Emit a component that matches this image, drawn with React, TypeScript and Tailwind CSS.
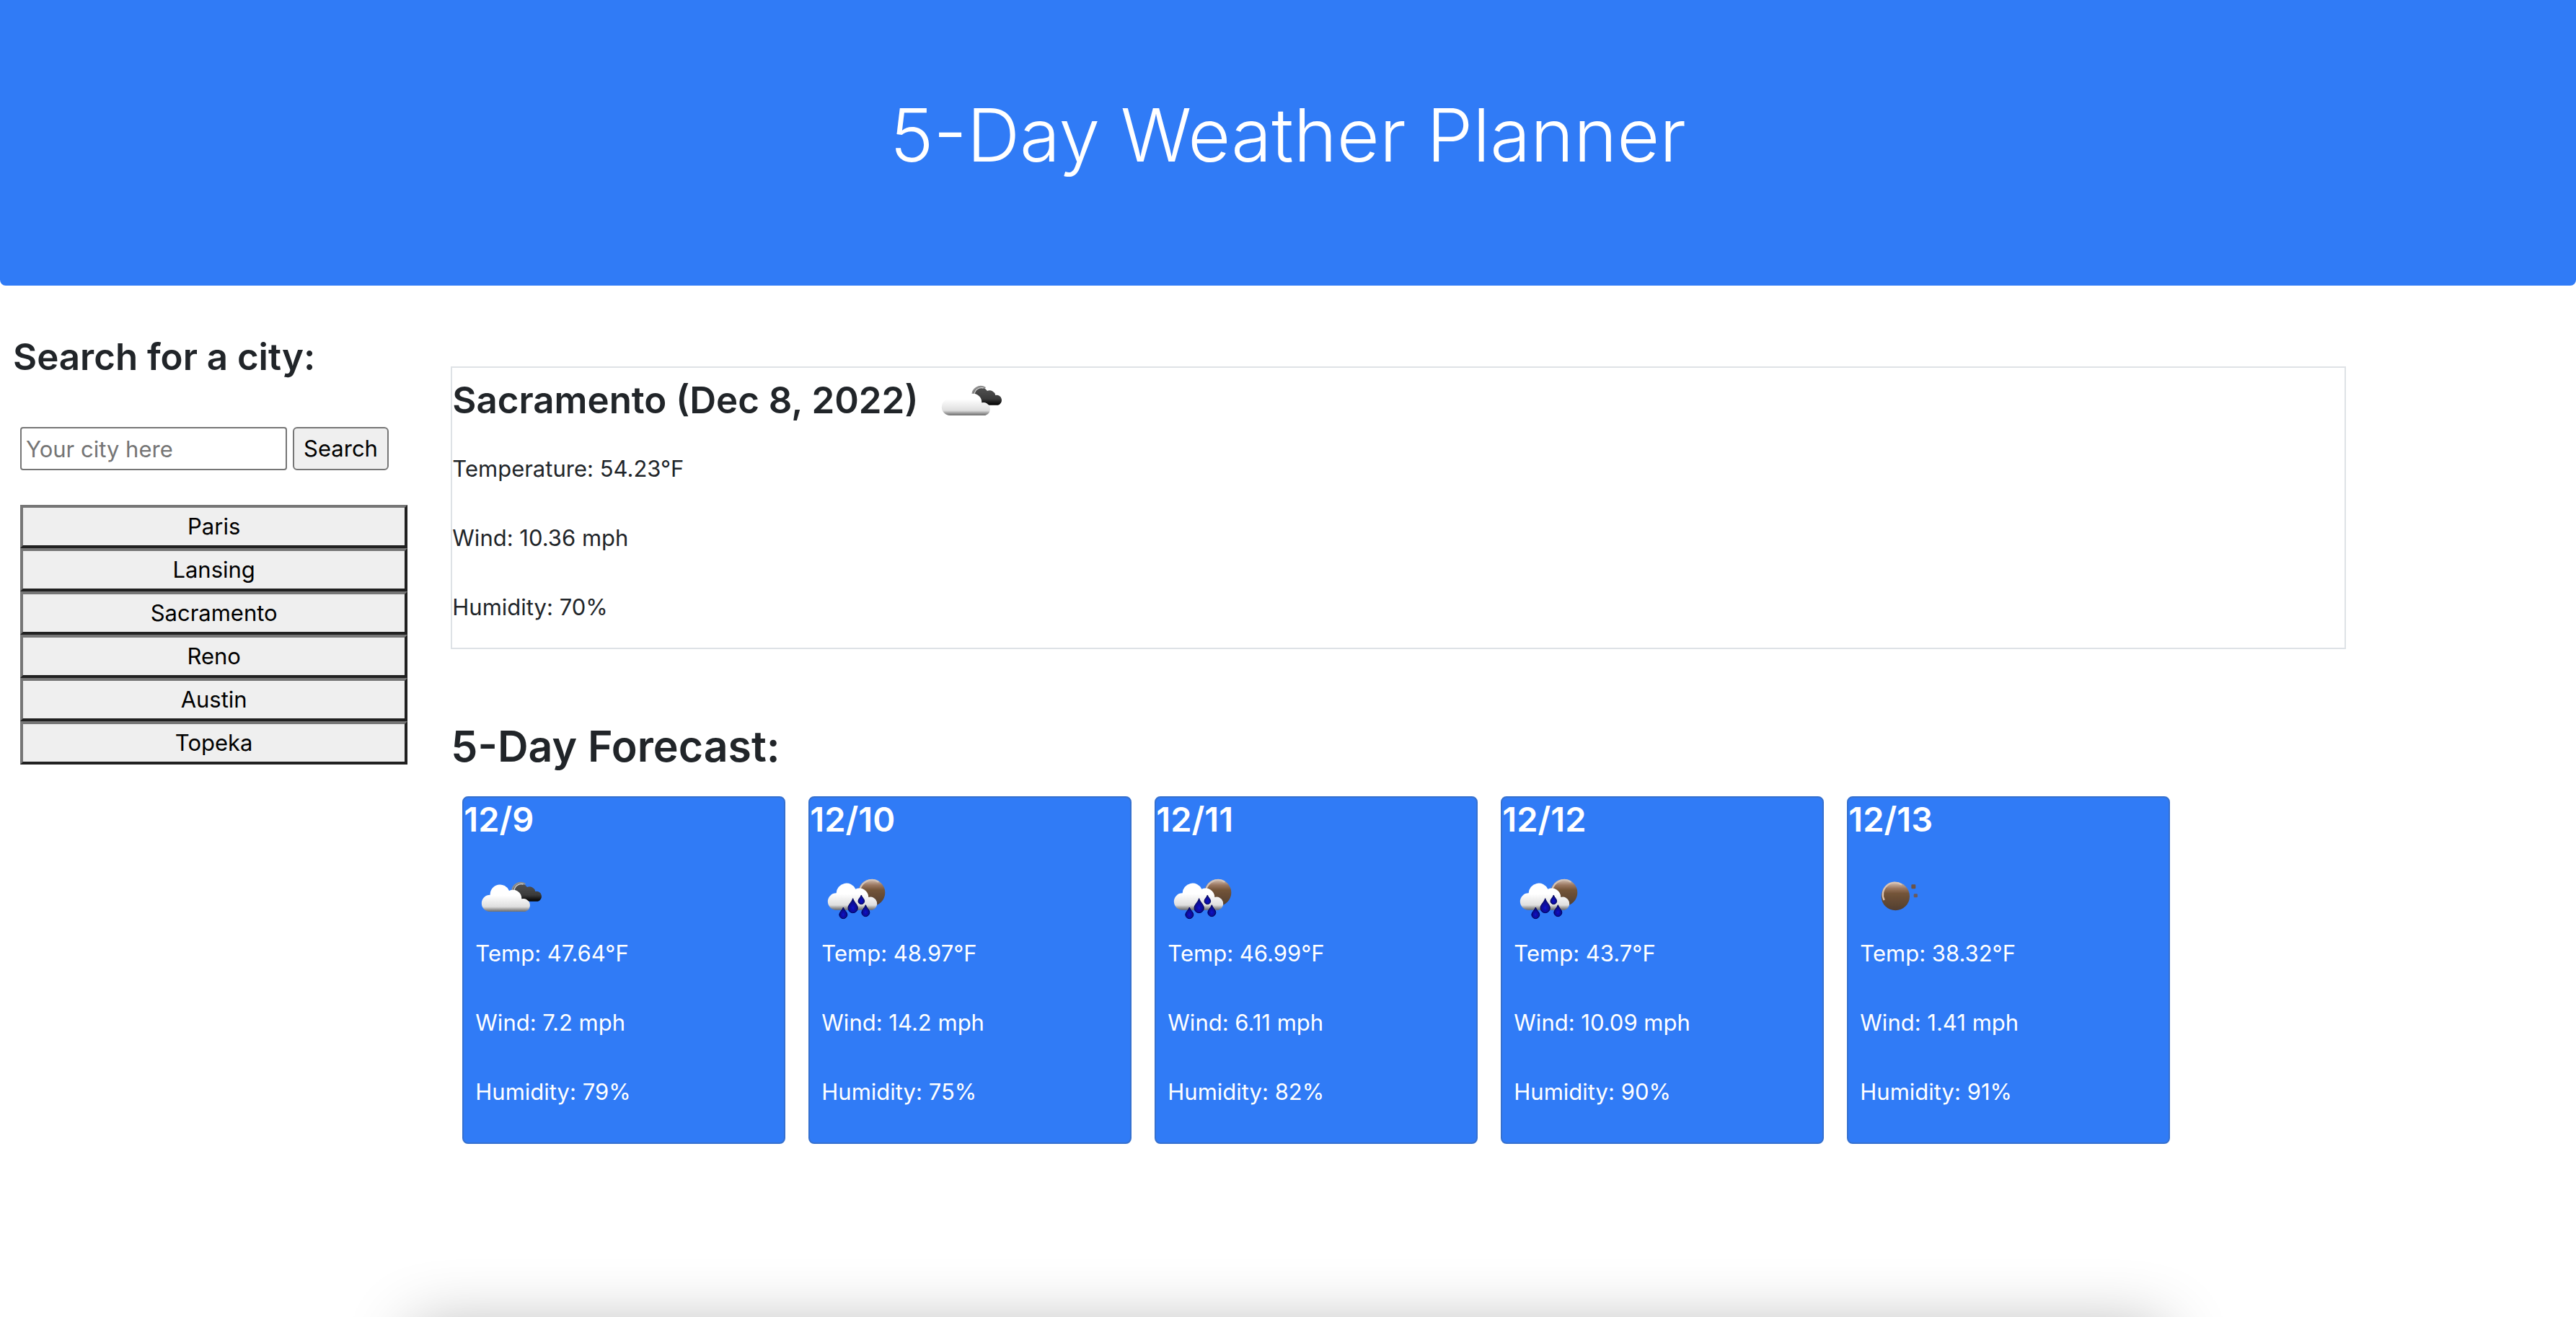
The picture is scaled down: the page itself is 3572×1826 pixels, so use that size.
import { useId, type ReactNode } from "react";

type IconKind = "clouds" | "rain" | "night";

const cities = ["Paris", "Lansing", "Sacramento", "Reno", "Austin", "Topeka"];

const forecast: { date: string; icon: IconKind; label: string; temp: string; wind: string; humidity: string }[] = [
  { date: "12/9", icon: "clouds", label: "Broken clouds", temp: "47.64", wind: "7.2", humidity: "79" },
  { date: "12/10", icon: "rain", label: "Rain", temp: "48.97", wind: "14.2", humidity: "75" },
  { date: "12/11", icon: "rain", label: "Rain", temp: "46.99", wind: "6.11", humidity: "82" },
  { date: "12/12", icon: "rain", label: "Rain", temp: "43.7", wind: "10.09", humidity: "90" },
  { date: "12/13", icon: "night", label: "Clear night", temp: "38.32", wind: "1.41", humidity: "91" },
];

function Drop({ x, y, w, h, fill }: { x: number; y: number; w: number; h: number; fill: string }) {
  const r = w / 2;
  return (
    <path
      d={`M${x} ${y} C${x + r * 0.3} ${y + h * 0.3} ${x + r} ${y + h * 0.42} ${x + r} ${y + h - r} A${r} ${r} 0 0 1 ${x - r} ${y + h - r} C${x - r} ${y + h * 0.42} ${x - r * 0.3} ${y + h * 0.3} ${x} ${y} Z`}
      fill={fill}
      stroke="#04045c"
      strokeWidth="3"
    />
  );
}

function WeatherIcon({ kind, label }: { kind: IconKind; label: string }) {
  const id = useId();
  const ref = (name: string) => `url(#${id}${name})`;
  const shapes: Record<IconKind, ReactNode> = {
    clouds: (
      <g transform="translate(-24 6)">
        <path d="M176 112 A35 35 0 0 1 240 90 A25 25 0 0 1 274 108 A21 21 0 0 1 284 149 L205 149 Z" fill={ref("dark")} />
        <path d="M179 110 A34 34 0 0 1 232 78" fill="none" stroke="#8d8d8d" strokeWidth="7" />
        <path d="M186 108 A30 30 0 0 1 224 78" fill="none" stroke="#d6d6d6" strokeWidth="4" />
        <path d="M85 192 A34 34 0 0 1 86 122 A41 41 0 0 1 165 105 A36 36 0 0 1 217 139 A27 27 0 0 1 232 192 Z" fill={ref("cloud")} />
      </g>
    ),
    rain: (
      <g transform="translate(-24 6)">
        <circle cx="233" cy="113" r="56" fill={ref("ball")} />
        <path d="M184 100 A52 52 0 0 1 262 68" fill="none" stroke="#d3c3b8" strokeWidth="7" />
        <path d="M85 185 A35 35 0 0 1 86 115 A42 42 0 0 1 166 98 A38 38 0 0 1 220 132 A27 27 0 0 1 236 185 Z" fill={ref("cloud")} />
        <Drop x={155} y={137} w={40} h={60} fill={ref("drop")} />
        <Drop x={190} y={123} w={26} h={38} fill={ref("drop")} />
        <Drop x={115} y={174} w={33} h={47} fill={ref("drop")} />
        <Drop x={208} y={164} w={33} h={48} fill={ref("drop")} />
      </g>
    ),
    night: (
      <g transform="translate(4 6)">
        <circle cx="144" cy="128" r="59" fill={ref("ball")} />
        <path d="M97 144 A50 50 0 0 1 170 80" fill="none" stroke="#dcc4b2" strokeWidth="7" />
        <rect x="210" y="79" width="18" height="18" rx="4" fill="#6b5247" />
        <rect x="220" y="118" width="16" height="15" rx="4" fill="#6b5a5c" />
      </g>
    ),
  };
  return (
    <svg viewBox="0 0 300 300" className="size-[100px] shrink-0" role="img" aria-label={label}>
      <defs>
        <linearGradient id={`${id}cloud`} x1="0" y1="0" x2="0" y2="1">
          <stop offset="0.4" stopColor="#ffffff" />
          <stop offset="0.82" stopColor="#dedede" />
          <stop offset="0.92" stopColor="#9a9a9a" />
          <stop offset="1" stopColor="#6e6e6e" />
        </linearGradient>
        <linearGradient id={`${id}dark`} x1="0" y1="0" x2="0" y2="1">
          <stop offset="0.2" stopColor="#4b4b4b" />
          <stop offset="0.65" stopColor="#3a3a3a" />
          <stop offset="1" stopColor="#000000" />
        </linearGradient>
        <linearGradient id={`${id}ball`} x1="0" y1="0" x2="0" y2="1">
          <stop offset="0" stopColor="#d8c6ba" />
          <stop offset="0.22" stopColor="#9a7760" />
          <stop offset="0.4" stopColor="#735438" />
          <stop offset="1" stopColor="#513e30" />
        </linearGradient>
        <radialGradient id={`${id}drop`} cx="0.5" cy="0.65" r="0.6">
          <stop offset="0" stopColor="#0a14c8" />
          <stop offset="1" stopColor="#050570" />
        </radialGradient>
        <filter id={`${id}soft`}>
          <feGaussianBlur stdDeviation="2" />
        </filter>
      </defs>
      <g filter={ref("soft")}>{shapes[kind]}</g>
    </svg>
  );
}

export default function App() {
  return (
    <div className="min-h-screen bg-white font-['Inter',sans-serif] text-[31px] leading-[48px] text-[#212529]">
      <header className="rounded-b-lg bg-[#307bf6] pt-[120px] pb-[142px] text-center text-white">
        <h1 className="text-[102px] leading-[134px] font-light">5-Day Weather Planner</h1>
      </header>

      <div className="flex">
        <aside className="w-1/6 shrink-0 pt-[66px]">
          <h2 className="pl-[18px] text-[51px] leading-[66px] font-semibold">
            <label htmlFor="city">Search for a city:</label>
          </h2>
          <form className="mt-16 flex gap-2 pl-7" onSubmit={(e) => e.preventDefault()}>
            <input
              id="city"
              type="text"
              placeholder="Your city here"
              className="h-[60px] w-[370px] rounded-[4px] border-2 border-[#767676] bg-white px-[6px] placeholder:text-[#757575]"
            />
            <button
              type="submit"
              className="h-[60px] w-[133px] rounded-[6px] border-2 border-[#767676] bg-[#efefef] text-black"
            >
              Search
            </button>
          </form>
          <div className="mt-12 flex flex-col pr-[30px] pl-7">
            {cities.map((city) => (
              <button
                key={city}
                type="button"
                className="h-[60px] border-4 border-t-[#767676] border-r-[#212121] border-b-[#212121] border-l-[#767676] bg-[#efefef] text-black"
              >
                {city}
              </button>
            ))}
          </div>
        </aside>

        <main className="min-w-0 flex-1 pt-28 pr-[319px] pl-[30px]">
          <section className="border-2 border-[#dee2e6] pb-8">
            <div className="mb-4 flex items-start gap-6">
              <h2 className="text-[51px] leading-[90px] font-semibold">Sacramento (Dec 8, 2022)</h2>
              <WeatherIcon kind="clouds" label="Broken clouds" />
            </div>
            <div className="flex flex-col gap-12">
              <p>Temperature: 54.23°F</p>
              <p>Wind: 10.36 mph</p>
              <p>Humidity: 70%</p>
            </div>
          </section>

          <h2 className="mt-24 text-[59px] leading-[78px] font-semibold">5-Day Forecast:</h2>
          <div className="mt-[30px] flex flex-wrap gap-8 pl-4 text-white">
            {forecast.map((day) => (
              <article key={day.date} className="w-[448px] rounded-lg border-2 border-[#3570cf] bg-[#307bf6] pb-[46px]">
                <h3 className="text-[47px] leading-[60px] font-semibold">{day.date}</h3>
                <div className="mt-8 pl-4">
                  <WeatherIcon kind={day.icon} label={day.label} />
                  <div className="flex flex-col gap-12">
                    <p>Temp: {day.temp}°F</p>
                    <p>Wind: {day.wind} mph</p>
                    <p>Humidity: {day.humidity}%</p>
                  </div>
                </div>
              </article>
            ))}
          </div>
        </main>
      </div>

      {/* Soft shadow rising from the bottom edge of the window */}
      <div className="pointer-events-none fixed inset-x-0 bottom-0 h-24 overflow-hidden">
        <div className="absolute inset-x-[16%] top-[110px] h-60 shadow-[0_0_90px_rgba(0,0,0,0.3)]" />
      </div>
    </div>
  );
}
